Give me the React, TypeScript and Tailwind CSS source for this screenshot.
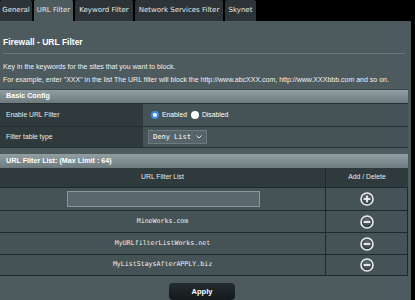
import React from "react";

const tabs = [
  { label: "General", w: "w-[32px]" },
  { label: "URL Filter", w: "w-[39px]", active: true },
  { label: "Keyword Filter", w: "w-[58px]" },
  { label: "Network Services Filter", w: "w-[88px]" },
  { label: "Skynet", w: "w-[31px]" },
];

function CircleIcon({ plus }: { plus?: boolean }) {
  return (
    <svg width="14" height="14" viewBox="0 0 14 14">
      <defs>
        <radialGradient id={plus ? "gp" : "gm"} cx="50%" cy="40%" r="60%">
          <stop offset="0%" stopColor="#6b787c" />
          <stop offset="100%" stopColor="#2a3336" />
        </radialGradient>
      </defs>
      <circle cx="7" cy="7" r="6" fill={`url(#${plus ? "gp" : "gm"})`} stroke="#e8ecec" strokeWidth="1.6" />
      <rect x="3.6" y="6.1" width="6.8" height="1.8" fill="#f2f4f4" />
      {plus && <rect x="6.1" y="3.6" width="1.8" height="6.8" fill="#f2f4f4" />}
    </svg>
  );
}

export default function App() {
  const items = ["MineWorks.com", "MyURLfilterListWorks.net", "MyListStaysAfterAPPLY.biz"];
  return (
    <div className="w-[415px] h-[300px] bg-black overflow-hidden text-white" style={{ fontFamily: '"Liberation Sans", Arial, sans-serif' }}>
      <div className="flex gap-[2px] h-[21px]">
        {tabs.map((t) => (
          <div
            key={t.label}
            className={`${t.w} h-[21px] flex items-center justify-center rounded-t-[2px] text-[7px] whitespace-nowrap ${t.active ? "bg-[#4d5a5e]" : "bg-[#2c3437]"} text-[#e4e8e8]`}
            style={{ fontFamily: '"DejaVu Sans", Verdana, sans-serif' }}
          >
            {t.label}
          </div>
        ))}
      </div>
      <div className="w-[411px] h-[279px] bg-[#4d5a5e] flex flex-col">
        <div className="pl-[3px] pt-[15px] h-[32px] text-[8.5px] font-bold leading-[12px]">Firewall - URL Filter</div>
        <div className="ml-[3px] w-[402px] h-px bg-[#6b797d]" />
        <div className="pl-[3px] pt-[6px] text-[7px] leading-[13px] text-[#eef1f1] whitespace-nowrap">
          <div>Key in the keywords for the sites that you want to block.</div>
          <div>For example, enter "XXX" in the list The URL filter will block the http://www.abcXXX.com, http://www.XXXbbb.com and so on.</div>
        </div>
        <div className="mt-[3px] w-[408px]">
          <div className="h-[14px] bg-gradient-to-b from-[#919ea2] to-[#6d7b7f] flex items-center pl-[6px] text-[7.2px] font-bold border-t border-[#3b4649]">Basic Config</div>
          <div className="flex h-[23px] border-t border-[#263033]">
            <div className="w-[143px] bg-[#2f3a3d] flex items-center pl-[6px] text-[6.8px] text-[#e6eaea]">Enable URL Filter</div>
            <div className="flex-1 bg-[#465356] flex items-center pl-[8px] text-[6.8px] gap-[1px]">
              <span className="w-[8px] h-[8px] rounded-full border-[2px] border-[#3d8de6] bg-white inline-block" />
              <span className="ml-[2px] mr-[3px]">Enabled</span>
              <span className="w-[8px] h-[8px] rounded-full bg-white inline-block" />
              <span className="ml-[2px]">Disabled</span>
            </div>
          </div>
          <div className="flex h-[22px] border-t border-[#263033] border-b">
            <div className="w-[143px] bg-[#2f3a3d] flex items-center pl-[6px] text-[6.8px] text-[#e6eaea]">Filter table type</div>
            <div className="flex-1 bg-[#465356] flex items-center pl-[5px]">
              <div className="w-[59px] h-[14px] bg-[#56646a] border border-[#6d7b80] flex items-center justify-between px-[4px] text-[7px]" style={{ fontFamily: '"DejaVu Sans Mono", monospace' }}>
                <span>Deny List</span>
                <svg width="6" height="4" viewBox="0 0 6 4"><path d="M0.5 0.5 L3 3 L5.5 0.5" stroke="#e6eaea" strokeWidth="1" fill="none" /></svg>
              </div>
            </div>
          </div>
        </div>
        <div className="mt-[6px] w-[408px]">
          <div className="h-[14px] bg-gradient-to-b from-[#919ea2] to-[#6d7b7f] flex items-center pl-[6px] text-[7.2px] font-bold">URL Filter List: (Max Limit : 64)</div>
          <div className="flex h-[19px] bg-[#2f3a3d] text-[6.8px] text-[#e6eaea]">
            <div className="w-[326px] flex items-center justify-center border-r border-[#1f282a]">URL Filter List</div>
            <div className="flex-1 flex items-center justify-center">Add / Delete</div>
          </div>
          <div className="flex h-[23px] bg-[#465356] border-t border-[#1f282a] border-r">
            <div className="w-[326px] flex items-center border-r border-[#1f282a] pl-[67px]">
              <div className="w-[193px] h-[16px] bg-[#5a686d] border border-[#8a989c]" />
            </div>
            <div className="flex-1 flex items-center justify-center"><CircleIcon plus /></div>
          </div>
          {items.map((it) => (
            <div key={it} className="flex h-[22px] bg-[#465356] border-t border-[#1f282a] border-r last:border-b">
              <div className="w-[326px] flex items-center justify-center border-r border-[#1f282a] text-[6.6px] text-[#eef1f1]" style={{ fontFamily: '"DejaVu Sans Mono", monospace' }}>{it}</div>
              <div className="flex-1 flex items-center justify-center"><CircleIcon /></div>
            </div>
          ))}
        </div>
        <div className="flex justify-center mt-[7px] w-[408px]">
          <div className="w-[66px] h-[17px] rounded-[4px] bg-gradient-to-b from-[#232c2f] to-[#141a1c] flex items-center justify-center text-[7.5px] font-bold ml-[-4px]">Apply</div>
        </div>
      </div>
    </div>
  );
}
